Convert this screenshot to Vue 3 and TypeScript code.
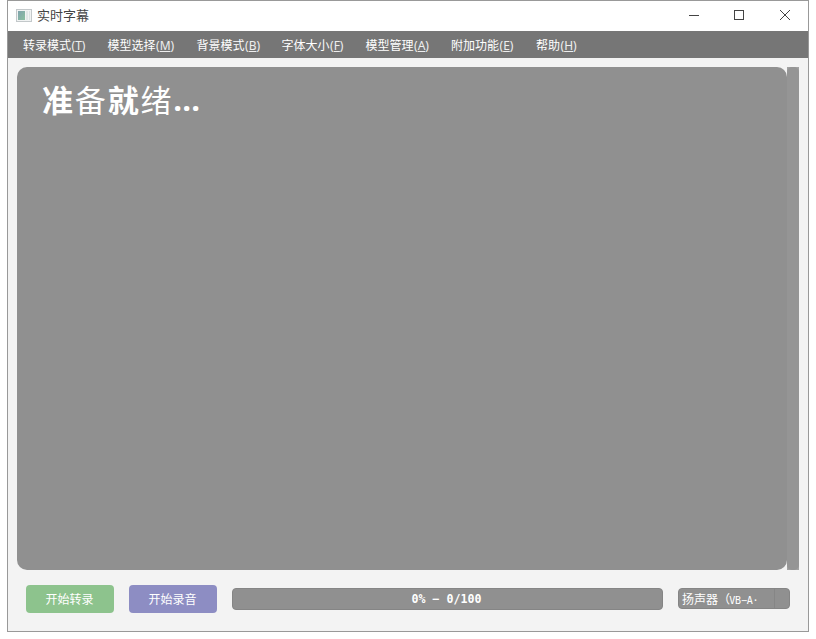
<script setup lang="ts">
interface MenuEntry {
  label: string
  key: string
  width: number
}

const menus: MenuEntry[] = [
  { label: '转录模式', key: 'T', width: 84.5 },
  { label: '模型选择', key: 'M', width: 89 },
  { label: '背景模式', key: 'B', width: 85 },
  { label: '字体大小', key: 'F', width: 84 },
  { label: '模型管理', key: 'A', width: 85.5 },
  { label: '附加功能', key: 'E', width: 85 },
  { label: '帮助', key: 'H', width: 60 },
]

const caption = [
  { text: '准', bold: true },
  { text: '备', bold: false },
  { text: '就', bold: true },
  { text: '绪', bold: false },
]
</script>

<template>
  <div class="window">
    <header class="titlebar">
      <svg class="app-icon" width="16" height="14" viewBox="0 0 16 14">
        <defs>
          <linearGradient id="pane" x1="0" y1="0" x2="1" y2="1">
            <stop offset="0" stop-color="#7fa3ad" />
            <stop offset="1" stop-color="#8cc0a0" />
          </linearGradient>
        </defs>
        <rect x=".5" y=".5" width="15" height="12" fill="#f1f3f3" stroke="#c3c8ca" />
        <rect x="2" y="2" width="7" height="9" fill="url(#pane)" />
        <rect x="10" y="2" width="2" height="9" fill="#e1e7e7" />
        <rect x="13" y="2" width="1" height="9" fill="#dde3e4" />
      </svg>
      <span class="title">实时字幕</span>
      <div class="controls">
        <svg width="11" height="11" viewBox="0 0 11 11"><path d="M0 5.5H10" /></svg>
        <svg width="11" height="11" viewBox="0 0 11 11"><rect x=".5" y=".5" width="9" height="9" /></svg>
        <svg width="11" height="11" viewBox="0 0 11 11"><path d="M0 0 10 10M10 0 0 10" /></svg>
      </div>
    </header>
    <nav class="menubar">
      <div v-for="m in menus" :key="m.key" class="menu" :style="{ width: m.width + 'px' }">
        {{ m.label }}<span class="key">(<u>{{ m.key }}</u>)</span>
      </div>
    </nav>
    <main class="view">
      <div class="caption">
        <span v-for="c in caption" :key="c.text" :class="{ bold: c.bold }">{{ c.text }}</span><span class="dots">...</span>
      </div>
      <div class="scroll"><div class="thumb"></div></div>
    </main>
    <footer class="footer">
      <button class="btn green">开始转录</button>
      <button class="btn purple">开始录音</button>
      <div class="progress">0% − 0/100</div>
      <div class="select">
        <div class="value">扬声器<span class="paren">（</span><span class="latin">VB−A·</span></div>
        <div class="drop"></div>
      </div>
    </footer>
  </div>
</template>

<style>
body {
  background: #fff;
}
</style>

<style scoped>
.window {
  box-sizing: border-box;
  width: 802px;
  height: 632px;
  margin-left: 7px;
  border: 1px solid #999;
  background: #f3f3f3;
  display: flex;
  flex-direction: column;
  font-family: "Noto Sans", "Noto Sans CJK SC", sans-serif;
}
.titlebar {
  height: 30px;
  background: #fff;
  display: flex;
  align-items: center;
  padding: 0 17px 0 8px;
}
.app-icon {
  margin-right: 5px;
}
.title {
  font: 13px/28px "Noto Sans CJK SC", sans-serif;
  color: #444;
  padding-bottom: 2px;
}
.controls {
  margin-left: auto;
  display: flex;
  gap: 34px;
  margin-top: -1px;
}
.controls svg {
  fill: none;
  stroke: #444;
  stroke-width: 1;
}
.controls svg:last-child {
  margin-left: 1px;
  overflow: visible;
}
.menubar {
  height: 27px;
  background: #767676;
  display: flex;
  padding-left: 15px;
  color: #fff;
  font: 12px/27px "Noto Sans CJK SC", sans-serif;
}
.menu {
  flex: none;
  white-space: nowrap;
}
.key {
  font-family: "Noto Sans", sans-serif;
  margin-left: 0.5px;
  color: #eee;
}
.key u {
  text-underline-offset: 1px;
  text-decoration-thickness: 1px;
}
.view {
  height: 503px;
  margin: 9px 9px 0;
  display: flex;
}
.caption {
  box-sizing: border-box;
  width: 770px;
  padding: 9px 25px;
  border-radius: 10px;
  background: #909090;
  color: #fff;
  display: flex;
  font: 31px/46px "Noto Sans CJK SC", sans-serif;
  letter-spacing: 1.8px;
}
.bold {
  font-weight: 700;
}
.dots {
  font-family: "Open Sans", sans-serif;
  font-weight: 700;
  letter-spacing: 0.2px;
}
.scroll {
  width: 12px;
  background: #a2a2a2;
}
.thumb {
  height: 100%;
  border-radius: 5px;
  background: #959595;
}
.footer {
  display: flex;
  align-items: center;
  padding: 15px 18px 0;
}
.btn {
  width: 88px;
  height: 28px;
  margin: 0 15px 0 0;
  padding: 0 1px 0 0;
  border: 0;
  border-radius: 4px;
  color: #fff;
  font: 12px/28px "Noto Sans CJK SC", sans-serif;
}
.green {
  background: #8dc38d;
}
.purple {
  background: #8d8dc3;
}
.progress {
  box-sizing: border-box;
  width: 431px;
  height: 22px;
  padding-right: 2px;
  border: 1px solid #858585;
  border-radius: 4px;
  background: #909090;
  color: #fff;
  text-align: center;
  font: bold 11.63px/20px "DejaVu Sans Mono", monospace;
}
.select {
  box-sizing: border-box;
  width: 112px;
  height: 21px;
  margin: 0 0 1px 15px;
  border: 1px solid #858585;
  border-radius: 4px;
  background: #909090;
  color: #fff;
  display: flex;
  font: 12px/19px "Noto Sans CJK SC", sans-serif;
}
.value {
  box-sizing: border-box;
  width: 95px;
  height: 19px;
  padding-left: 3px;
  white-space: nowrap;
  overflow: hidden;
}
.latin {
  font: 10px/15px "DejaVu Sans Mono", monospace;
  letter-spacing: -0.2px;
  vertical-align: 0.5px;
}
.paren {
  margin-right: -0.8px;
}
.drop {
  flex: 1;
  border-left: 1px solid #868686;
}
</style>
